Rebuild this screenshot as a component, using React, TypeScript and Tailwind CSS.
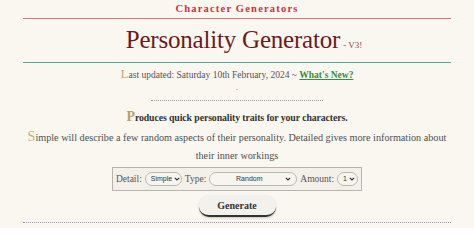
import React from 'react';

const serif = { fontFamily: '"Liberation Serif", "Times New Roman", serif' };

function Select({ value, className }: { value: string; className: string }) {
  return (
    <span
      className={`inline-flex items-center justify-between h-[14px] rounded-full border border-[#bdb8ad] bg-[#f7f5f0] px-[5px] text-[7px] text-[#333] ${className}`}
      style={{ fontFamily: '"Liberation Sans", Arial, sans-serif' }}
    >
      <span className="flex-1 text-center">{value}</span>
      <svg width="6" height="4" viewBox="0 0 6 4" className="ml-[2px] shrink-0">
        <path d="M0.8 0.8 L3 3 L5.2 0.8" stroke="#333" strokeWidth="1.2" fill="none" />
      </svg>
    </span>
  );
}

export default function App() {
  return (
    <div className="w-[474px] h-[228px] overflow-hidden bg-[#faf7f0] text-[#555]" style={serif}>
      <div className="pt-[2px] text-center text-[10.5px] font-bold leading-[14px] tracking-[1.2px] text-[#c9333d]">Character Generators</div>
      <div className="mx-[23px] mt-[2px] h-[1px] bg-[#d9737b]" />
      <div className="mt-[4px] flex items-baseline justify-center pl-[14px] text-[#6b1a1c]">
        <span className="text-[25px] leading-[34px] tracking-[-0.2px]">Personality Generator</span>
        <span className="ml-[3px] text-[9px] text-[#8a4a4a]">- V3!</span>
      </div>
      <div className="mx-[23px] mt-[5px] h-[1px] bg-[#5aa3a3]" />
      <div className="mt-[3px] text-center text-[9.5px] leading-[16px] text-[#555]">
        <span className="text-[13px] text-[#c7a86a]">L</span>ast updated: Saturday 10th February, 2024 ~{' '}
        <span className="font-bold text-[#3d8a3d] underline">What's New?</span>
      </div>
      <div className="text-center text-[8px] leading-[10px]">.</div>
      <div className="mx-auto mt-[7px] w-[172px] border-t border-dotted border-[#999]" />
      <div className="mt-[7px] text-center text-[9.8px] font-bold leading-[18px] tracking-[-0.1px] text-[#333]">
        <span className="text-[14px] text-[#b9a06a]">P</span>roduces quick personality traits for your characters.
      </div>
      <div className="mx-[20px] mt-[1px] text-center text-[10.2px] leading-[18px] text-[#4f4f4f]">
        <span className="text-[14px] text-[#c7b27a]">S</span>imple will describe a few random aspects of their personality. Detailed gives more information about their inner workings
      </div>
      <div className="mt-[2px] flex justify-center">
        <div className="flex items-center gap-[3px] border border-[#b9b4aa] bg-[#f3f0ea] px-[3px] py-[4px] text-[9.5px] text-[#555]">
          <span>Detail:</span>
          <Select value="Simple" className="w-[37px]" />
          <span>Type:</span>
          <Select value="Random" className="w-[88px]" />
          <span>Amount:</span>
          <Select value="1" className="w-[21px]" />
        </div>
      </div>
      <div className="mt-[4px] flex justify-center">
        <button className="h-[22px] w-[77px] rounded-[10px] border-b-2 border-[#333] bg-[#f3f1ec] text-[10px] font-bold text-[#333] shadow-[0_1px_2px_rgba(0,0,0,0.2)]">
          Generate
        </button>
      </div>
      <div className="mx-[23px] mt-[5px] border-t border-dotted border-[#9b8fb0]" />
    </div>
  );
}
